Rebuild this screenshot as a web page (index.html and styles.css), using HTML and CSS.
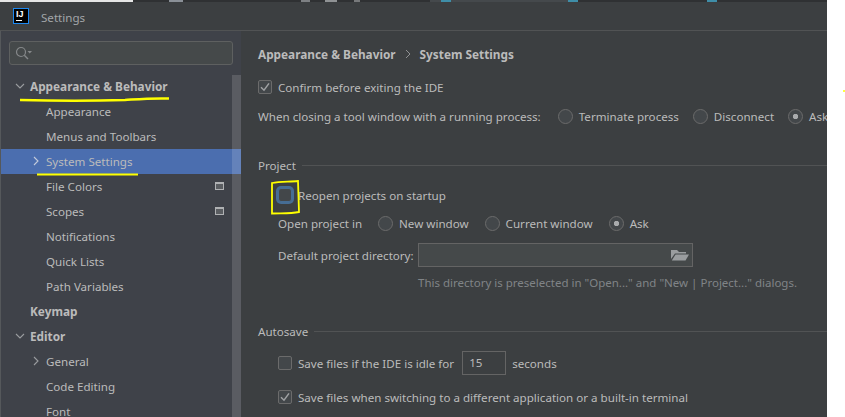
FILE: index.html
```html
<!DOCTYPE html>
<html lang="en">
<head>
    <meta charset="UTF-8">
    <title>Settings</title>
    <link rel="stylesheet" href="styles.css">
</head>
<body>
    <div class="window">
        <svg class="strip" width="827" height="2">
            <rect width="827" height="2" fill="#2f3133"/>
            <rect width="133" height="2" fill="#e6e6e6"/>
            <rect x="169" width="14" height="2" fill="#8a9097"/>
            <rect x="301" width="9" height="2" fill="#7d8083"/>
            <rect x="325" width="12" height="2" fill="#8f9294"/>
            <rect x="354" width="6" height="2" fill="#77797b"/>
            <rect x="430" width="139" height="2" fill="#45494c"/>
            <rect x="441" width="10" height="2" fill="#3f8ea8"/>
            <rect x="568" width="10" height="2" fill="#3f8ea8"/>
            <rect x="707" width="10" height="2" fill="#3f8ea8"/>
        </svg>
        <header class="titlebar">
            <div class="app-logo"><span class="app-logo-text">IJ</span><span class="app-logo-bar"></span></div>
            <span class="app-title">Settings</span>
        </header>
        <div class="panes">
            <aside class="sidebar">
                <div class="search">
                    <svg width="18" height="14" viewBox="0 0 18 14" fill="none">
                        <circle cx="6" cy="6" r="4.5" stroke="#85888a" stroke-width="1.2"/>
                        <path d="M9.3 9.3 L13 13" stroke="#85888a" stroke-width="1.4"/>
                        <path d="M12.5 5 H17 L14.75 7.5 Z" fill="#85888a"/>
                    </svg>
                </div>
                <ul class="tree">
                    <li class="node top"><svg class="arrow" width="10" height="10" viewBox="0 0 10 10"><path d="M1 3 L5 7 L9 3" fill="none" stroke="#9a9c9f" stroke-width="1.1"/></svg>Appearance &amp; Behavior</li>
                    <li class="node">Appearance</li>
                    <li class="node">Menus and Toolbars</li>
                    <li class="node selected"><svg class="arrow" width="10" height="10" viewBox="0 0 10 10"><path d="M3 1 L7 5 L3 9" fill="none" stroke="#c3cbdb" stroke-width="1.1"/></svg>System Settings</li>
                    <li class="node">File Colors<span class="scope-icon"></span></li>
                    <li class="node">Scopes<span class="scope-icon"></span></li>
                    <li class="node">Notifications</li>
                    <li class="node">Quick Lists</li>
                    <li class="node">Path Variables</li>
                    <li class="node top">Keymap</li>
                    <li class="node top"><svg class="arrow" width="10" height="10" viewBox="0 0 10 10"><path d="M1 3 L5 7 L9 3" fill="none" stroke="#9a9c9f" stroke-width="1.1"/></svg>Editor</li>
                    <li class="node"><svg class="arrow" width="10" height="10" viewBox="0 0 10 10"><path d="M3 1 L7 5 L3 9" fill="none" stroke="#9a9c9f" stroke-width="1.1"/></svg>General</li>
                    <li class="node">Code Editing</li>
                    <li class="node">Font</li>
                </ul>
                <div class="scrollbar"></div>
            </aside>
            <main class="content">
                <div class="crumbs">
                    <span>Appearance &amp; Behavior</span>
                    <svg width="8" height="10" viewBox="0 0 8 10"><path d="M2 1 L6 5 L2 9" fill="none" stroke="#8f9193" stroke-width="1"/></svg>
                    <span>System Settings</span>
                </div>

                <label class="row confirm-row">
                    <span class="checkbox checked"><svg width="12" height="12" viewBox="0 0 12 12"><path d="M2 6.2 L5 9.2 L10 2.4" fill="none" stroke="#a0a2a4" stroke-width="1.5"/></svg></span>
                    Confirm before exiting the IDE
                </label>
                <div class="row closing-row">
                    <span>When closing a tool window with a running process:</span>
                    <span class="radio wide"></span><span class="radio-label">Terminate process</span>
                    <span class="radio tight"></span><span class="radio-label">Disconnect</span>
                    <span class="radio on tight"></span><span class="radio-label">Ask</span>
                </div>

                <div class="section-title project-title"><span>Project</span><span class="section-line"></span></div>
                <label class="row indented reopen-row">
                    <span class="checkbox focused"></span>
                    Reopen projects on startup
                </label>
                <div class="row indented open-row">
                    <span>Open project in</span>
                    <span class="radio"></span><span class="radio-label">New window</span>
                    <span class="radio"></span><span class="radio-label">Current window</span>
                    <span class="radio on"></span><span class="radio-label">Ask</span>
                </div>
                <div class="row indented dir-row">
                    <span>Default project directory:</span>
                    <div class="dir-input">
                        <svg width="18" height="12" viewBox="0 0 18 12"><path d="M0 1 H6 L8 3 H15 V4.5 H4 L0 10 Z" fill="#9a9d9f"/><path d="M4.6 5.5 H18 L14.5 11.5 H0.8 Z" fill="#9a9d9f"/></svg>
                    </div>
                </div>
                <div class="hint">This directory is preselected in "Open..." and "New | Project..." dialogs.</div>

                <div class="section-title autosave-title"><span>Autosave</span><span class="section-line"></span></div>
                <div class="row indented idle-row">
                    <span class="checkbox"></span>
                    <span>Save files if the IDE is idle for</span>
                    <span class="num-input">15</span>
                    <span>seconds</span>
                </div>
                <label class="row indented switch-row">
                    <span class="checkbox checked"><svg width="12" height="12" viewBox="0 0 12 12"><path d="M2 6.2 L5 9.2 L10 2.4" fill="none" stroke="#a0a2a4" stroke-width="1.5"/></svg></span>
                    Save files when switching to a different application or a built-in terminal
                </label>
            </main>
        </div>
    </div>

    <!-- yellow marker drawn on top of the screenshot -->
    <svg class="marker" width="845" height="417" fill="none" stroke="#ffff00">
        <path d="M20 100 C60 101 90 101 125 100 C140 99 150 98 169 98.5" stroke-width="2.5"/>
        <path d="M37 174.5 H138" stroke-width="2.2"/>
        <path d="M272 183 C280 181 290 182 298 181 L299 212 C290 214 280 213 272 213.5 Z" stroke-width="1.8"/>
        <path d="M844 90 V92" stroke-width="1.5"/>
    </svg>
</body>
</html>
```

FILE: styles.css
```css
html, body {
    margin: 0;
    padding: 0;
}

body {
    width: 845px;
    height: 417px;
    overflow: hidden;
    background-color: #fff;
    font-family: "Noto Sans", Arial, sans-serif;
    font-size: 11.6px;
    color: #bbb;
}

.window {
    width: 827px;
    height: 417px;
    background-color: #3c3f41;
    overflow: hidden;
    display: flex;
    flex-direction: column;
}

.strip {
    display: block;
    flex: none;
}

.titlebar {
    flex: none;
    height: 28px;
    display: flex;
    align-items: center;
    gap: 12px;
    padding-left: 13px;
    border-bottom: 1px solid #515354;
}

.app-logo {
    position: relative;
    box-sizing: border-box;
    width: 16px;
    height: 16px;
    background-color: #000;
    border: 1px solid #1e88f0;
}

.app-logo-text {
    position: absolute;
    left: 2px;
    top: 0;
    font-family: "Liberation Sans", Arial, sans-serif;
    font-size: 9px;
    line-height: 10px;
    font-weight: bold;
    color: #fff;
}

.app-logo-bar {
    position: absolute;
    left: 2px;
    bottom: 2px;
    width: 6px;
    height: 1px;
    background-color: #fff;
}

.app-title {
    margin-top: 3px;
    color: #a3a6a9;
}

.panes {
    flex: 1;
    display: flex;
    min-height: 0;
}

.sidebar {
    position: relative;
    box-sizing: border-box;
    width: 241px;
    flex: none;
    padding-top: 10px;
    background-color: #3f4249;
    border-left: 1px solid #55585b;
}

.search {
    box-sizing: border-box;
    width: 224px;
    height: 24px;
    margin-left: 8px;
    padding: 4px 0 0 5px;
    background-color: #45494a;
    border: 1px solid #5e6060;
    border-radius: 3px;
}

.tree {
    list-style: none;
    margin: 9px 0 0;
    padding: 0;
}

.node {
    position: relative;
    height: 25px;
    line-height: 25px;
    padding-left: 45px;
    white-space: nowrap;
}

.node.top {
    padding-left: 29px;
    font-size: 11.8px;
    font-weight: bold;
}

.node.selected {
    background-color: #4b6eaf;
}

.arrow {
    position: absolute;
    left: 30px;
    top: 7px;
}

.node.top .arrow {
    left: 14px;
}

.scope-icon {
    position: absolute;
    left: 214px;
    top: 8px;
    box-sizing: border-box;
    width: 9px;
    height: 8px;
    background-color: #5a5d61;
    border: 1px solid #afb1b3;
    border-top-width: 2px;
}

.scrollbar {
    position: absolute;
    left: 231px;
    top: 44px;
    bottom: 0;
    width: 9px;
    background-color: rgba(255, 255, 255, 0.14);
}

.content {
    flex: 1;
    min-width: 0;
    padding: 12px 0 0 17px;
    overflow: hidden;
}

.crumbs {
    height: 22px;
    display: flex;
    align-items: center;
    gap: 8px;
    font-size: 11.8px;
    font-weight: bold;
}

.row {
    height: 20px;
    display: flex;
    align-items: center;
    white-space: nowrap;
}

.indented {
    padding-left: 20px;
}

.confirm-row { margin-top: 12px; }
.closing-row { margin-top: 9px; }
.project-title { margin-top: 29px; }
.reopen-row { margin-top: 10px; }
.open-row { margin-top: 8px; }
.dir-row { margin-top: 10px; height: 24px; }
.autosave-title { margin-top: 28px; }
.idle-row { margin-top: 10px; height: 24px; }
.switch-row { margin-top: 12px; }

.checkbox {
    box-sizing: border-box;
    flex: none;
    width: 14px;
    height: 14px;
    margin-right: 6px;
    background-color: #43474a;
    border: 1px solid #6b6b6b;
    border-radius: 2px;
    display: flex;
    align-items: center;
    justify-content: center;
}

.checkbox.focused {
    border-color: #466d94;
    box-shadow: 0 0 0 2px #466d94;
    border-radius: 3px;
}

.radio {
    box-sizing: border-box;
    flex: none;
    width: 15px;
    height: 15px;
    margin-left: 16px;
    margin-right: 6px;
    background-color: #43474a;
    border: 1px solid #6b6b6b;
    border-radius: 50%;
}

.radio.wide {
    margin-left: 17px;
}

.radio.tight {
    margin-left: 14px;
}

.radio.on {
    background: radial-gradient(circle, #a9abad 0, #a9abad 2.4px, #43474a 3px);
}

.section-title {
    height: 20px;
    display: flex;
    align-items: center;
    gap: 6px;
}

.section-line {
    flex: 1;
    height: 1px;
    background-color: #515354;
}

.dir-input {
    box-sizing: border-box;
    width: 275px;
    height: 24px;
    margin-left: 4px;
    padding-right: 3px;
    background-color: #45494a;
    border: 1px solid #646464;
    display: flex;
    align-items: center;
    justify-content: flex-end;
}

.hint {
    height: 20px;
    line-height: 20px;
    margin-top: 6px;
    padding-left: 160px;
    font-size: 11.5px;
    color: #808487;
    white-space: nowrap;
}

.num-input {
    box-sizing: border-box;
    width: 44px;
    height: 24px;
    line-height: 22px;
    margin: 0 6px 0 8px;
    padding-left: 6px;
    border: 1px solid #646464;
    background-color: #3c3f41;
}

.marker {
    position: absolute;
    left: 0;
    top: 0;
}
```
